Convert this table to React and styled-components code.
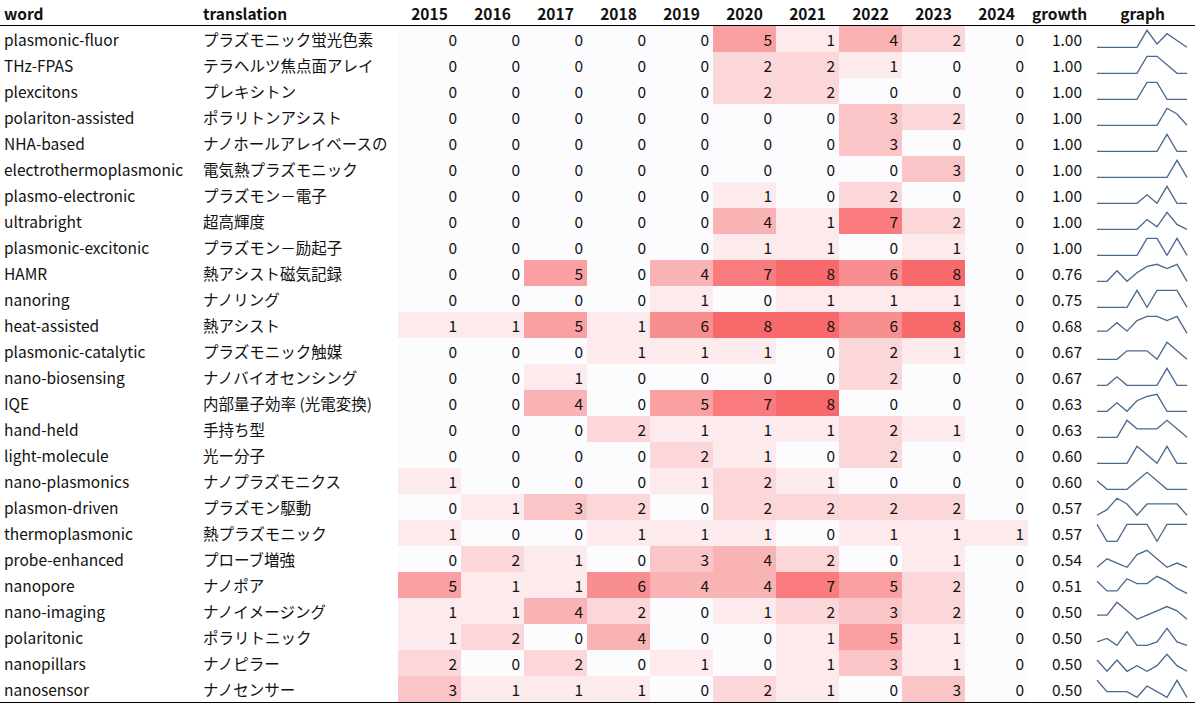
import styled, { createGlobalStyle } from "styled-components";

const YEARS = [2015, 2016, 2017, 2018, 2019, 2020, 2021, 2022, 2023, 2024];

const rows = [
	["plasmonic-fluor", "プラズモニック蛍光色素", [0, 0, 0, 0, 0, 5, 1, 4, 2, 0], "1.00"],
	["THz-FPAS", "テラヘルツ焦点面アレイ", [0, 0, 0, 0, 0, 2, 2, 1, 0, 0], "1.00"],
	["plexcitons", "プレキシトン", [0, 0, 0, 0, 0, 2, 2, 0, 0, 0], "1.00"],
	["polariton-assisted", "ポラリトンアシスト", [0, 0, 0, 0, 0, 0, 0, 3, 2, 0], "1.00"],
	["NHA-based", "ナノホールアレイベースの", [0, 0, 0, 0, 0, 0, 0, 3, 0, 0], "1.00"],
	["electrothermoplasmonic", "電気熱プラズモニック", [0, 0, 0, 0, 0, 0, 0, 0, 3, 0], "1.00"],
	["plasmo-electronic", "プラズモン－電子", [0, 0, 0, 0, 0, 1, 0, 2, 0, 0], "1.00"],
	["ultrabright", "超高輝度", [0, 0, 0, 0, 0, 4, 1, 7, 2, 0], "1.00"],
	["plasmonic-excitonic", "プラズモン－励起子", [0, 0, 0, 0, 0, 1, 1, 0, 1, 0], "1.00"],
	["HAMR", "熱アシスト磁気記録", [0, 0, 5, 0, 4, 7, 8, 6, 8, 0], "0.76"],
	["nanoring", "ナノリング", [0, 0, 0, 0, 1, 0, 1, 1, 1, 0], "0.75"],
	["heat-assisted", "熱アシスト", [1, 1, 5, 1, 6, 8, 8, 6, 8, 0], "0.68"],
	["plasmonic-catalytic", "プラズモニック触媒", [0, 0, 0, 1, 1, 1, 0, 2, 1, 0], "0.67"],
	["nano-biosensing", "ナノバイオセンシング", [0, 0, 1, 0, 0, 0, 0, 2, 0, 0], "0.67"],
	["IQE", "内部量子効率 (光電変換)", [0, 0, 4, 0, 5, 7, 8, 0, 0, 0], "0.63"],
	["hand-held", "手持ち型", [0, 0, 0, 2, 1, 1, 1, 2, 1, 0], "0.63"],
	["light-molecule", "光ー分子", [0, 0, 0, 0, 2, 1, 0, 2, 0, 0], "0.60"],
	["nano-plasmonics", "ナノプラズモニクス", [1, 0, 0, 0, 1, 2, 1, 0, 0, 0], "0.60"],
	["plasmon-driven", "プラズモン駆動", [0, 1, 3, 2, 0, 2, 2, 2, 2, 0], "0.57"],
	["thermoplasmonic", "熱プラズモニック", [1, 0, 0, 1, 1, 1, 0, 1, 1, 1], "0.57"],
	["probe-enhanced", "プローブ増強", [0, 2, 1, 0, 3, 4, 2, 0, 1, 0], "0.54"],
	["nanopore", "ナノポア", [5, 1, 1, 6, 4, 4, 7, 5, 2, 0], "0.51"],
	["nano-imaging", "ナノイメージング", [1, 1, 4, 2, 0, 1, 2, 3, 2, 0], "0.50"],
	["polaritonic", "ポラリトニック", [1, 2, 0, 4, 0, 0, 1, 5, 1, 0], "0.50"],
	["nanopillars", "ナノピラー", [2, 0, 2, 0, 1, 0, 1, 3, 1, 0], "0.50"],
	["nanosensor", "ナノセンサー", [3, 1, 1, 1, 0, 2, 1, 0, 3, 0], "0.50"],
];

const MAX = 8;

// white (#fcfcff) -> red (#f8696b), two colour scale over the whole table
const heat = v => {
	const t = v / MAX;
	const r = Math.round(252 + (248 - 252) * t);
	const g = Math.round(252 + (105 - 252) * t);
	const b = Math.round(255 + (107 - 255) * t);
	return `rgb(${r}, ${g}, ${b})`;
};

const Sparkline = ({ values }) => {
	const min = Math.min(...values);
	const max = Math.max(...values);
	const span = max - min || 1;
	const points = values
		.map((v, i) => `${7 + i * 10},${(21.3 - ((v - min) / span) * 17).toFixed(2)}`)
		.join(" ");
	return (
		<Spark viewBox="0 0 105 26">
			<polyline points={points} fill="none" stroke="#4a6890" strokeWidth="1.3" />
		</Spark>
	);
};

const App = () => {
	return (
		<>
			<GlobalStyle />
			<Table>
				<colgroup>
					<Col $w={199} />
					<Col $w={199} />
					{YEARS.map(y => (
						<Col key={y} $w={63} />
					))}
					<Col $w={62} />
					<Col $w={105} />
				</colgroup>
				<thead>
					<tr>
						<HeadCell $align="left">word</HeadCell>
						<HeadCell $align="left">translation</HeadCell>
						{YEARS.map(y => (
							<HeadCell key={y}>{y}</HeadCell>
						))}
						<HeadCell>growth</HeadCell>
						<HeadCell>graph</HeadCell>
					</tr>
				</thead>
				<tbody>
					{rows.map(([word, tr, counts, growth]) => (
						<Row key={word}>
							<TextCell>{word}</TextCell>
							<TextCell>{tr}</TextCell>
							{counts.map((c, i) => (
								<CountCell key={i} $bg={heat(c)}>
									{c}
								</CountCell>
							))}
							<GrowthCell>{growth}</GrowthCell>
							<GraphCell>
								<Sparkline values={counts} />
							</GraphCell>
						</Row>
					))}
				</tbody>
			</Table>
		</>
	);
};

export default App;

const GlobalStyle = createGlobalStyle`
	body {
		margin: 0;
		background: #fff;
		font-family: "Noto Sans CJK JP", "Noto Sans", sans-serif;
		color: #111;
	}
`;

const Table = styled.table`
	width: 1195px;
	table-layout: fixed;
	border-collapse: collapse;
	border-bottom: 2px solid #000;
	font-size: 15.5px;
	line-height: 18px;
`;

const Col = styled.col`
	width: ${p => p.$w}px;
`;

const HeadCell = styled.th`
	height: 25px;
	padding: 0 4px;
	text-align: ${p => p.$align || "center"};
	font-weight: 700;
	border-bottom: 1px solid #000;
	white-space: nowrap;
`;

const Row = styled.tr`
	height: 25.85px;
`;

const TextCell = styled.td`
	padding: 0 4px;
	white-space: nowrap;
	overflow: hidden;
`;

const CountCell = styled.td`
	padding: 0 4px 0 0;
	text-align: right;
	background-color: ${p => p.$bg};
`;

const GrowthCell = styled.td`
	padding: 0 8px 0 0;
	text-align: right;
`;

const GraphCell = styled.td`
	padding: 0;
`;

const Spark = styled.svg`
	display: block;
	width: 105px;
	height: 26px;
`;
